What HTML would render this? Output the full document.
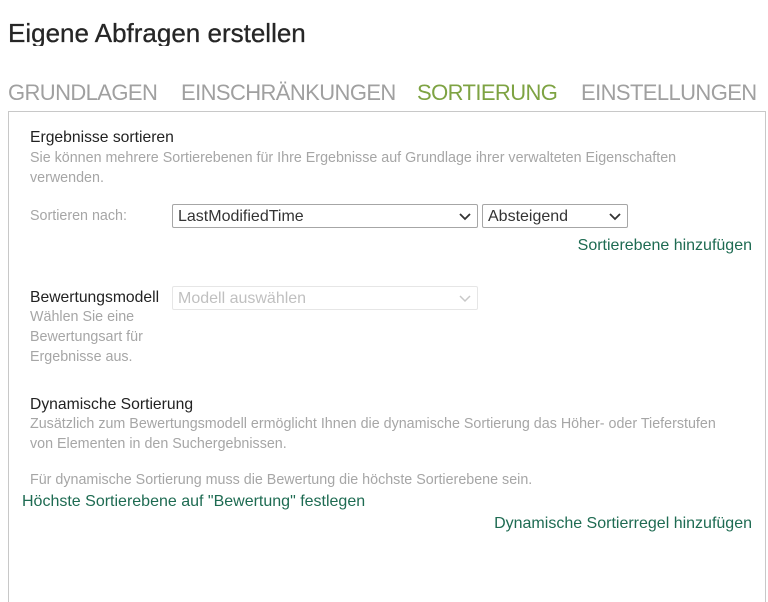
<!DOCTYPE html>
<html><head><meta charset="utf-8"><style>
html,body{margin:0;width:768px;height:602px;overflow:hidden}
body{background:#fff;font-family:"Liberation Sans",sans-serif;position:relative}
.a{position:absolute;white-space:nowrap}
.t{font-size:26px;color:#262626;top:18px;left:8px;height:28px;overflow:hidden;-webkit-text-stroke:0.3px #262626}
.tab{font-size:22px;top:80px;color:#a0a0a0;letter-spacing:-0.6px}
.box{position:absolute;left:8px;top:111px;width:756px;height:500px;border:1px solid #c8c8c8}
.h{font-size:15.7px;color:#222}
.g{font-size:14.3px;color:#a6a6a6;line-height:20px}
.l{font-size:16px;color:#1e6b52}
.sel{position:absolute;border:1px solid #a6a6a6;border-radius:2px;height:24px;box-sizing:border-box;font-size:16px;color:#333;padding:3px 5px}
.sel svg{position:absolute;right:6px;top:8px}
</style></head><body>
<div class="a t">Eigene Abfragen erstellen</div>
<div class="a tab" style="left:8px">GRUNDLAGEN</div>
<div class="a tab" style="left:181px">EINSCHRÄNKUNGEN</div>
<div class="a tab" style="left:417px;color:#7ea343">SORTIERUNG</div>
<div class="a tab" style="left:581px">EINSTELLUNGEN</div>
<div class="box"></div>
<div class="a h" style="left:30px;top:129px">Ergebnisse sortieren</div>
<div class="a g" style="left:30px;top:148px">Sie können mehrere Sortierebenen für Ihre Ergebnisse auf Grundlage ihrer verwalteten Eigenschaften<br>verwenden.</div>
<div class="a g" style="left:30px;top:206px">Sortieren nach:</div>
<div class="sel" style="left:172px;top:204px;width:306px">LastModifiedTime<svg width="12" height="8"><path d="M1 1l5 5 5-5" stroke="#333" stroke-width="1.8" fill="none"/></svg></div>
<div class="sel" style="left:482px;top:204px;width:146px">Absteigend<svg width="12" height="8"><path d="M1 1l5 5 5-5" stroke="#333" stroke-width="1.8" fill="none"/></svg></div>
<div class="a l" style="right:16px;top:237px">Sortierebene hinzufügen</div>
<div class="a h" style="left:30px;top:289px">Bewertungsmodell</div>
<div class="sel" style="left:172px;top:286px;width:306px;border-color:#e6e6e6;color:#c0c0c0">Modell auswählen<svg width="12" height="8"><path d="M1 1l5 5 5-5" stroke="#c8c8c8" stroke-width="1.5" fill="none"/></svg></div>
<div class="a g" style="left:30px;top:307px">Wählen Sie eine<br>Bewertungsart für<br>Ergebnisse aus.</div>
<div class="a h" style="left:30px;top:396px">Dynamische Sortierung</div>
<div class="a g" style="left:30px;top:414px">Zusätzlich zum Bewertungsmodell ermöglicht Ihnen die dynamische Sortierung das Höher- oder Tieferstufen<br>von Elementen in den Suchergebnissen.</div>
<div class="a g" style="left:30px;top:470px">Für dynamische Sortierung muss die Bewertung die höchste Sortierebene sein.</div>
<div class="a l" style="left:22px;top:493px">Höchste Sortierebene auf "Bewertung" festlegen</div>
<div class="a l" style="right:16px;top:515px">Dynamische Sortierregel hinzufügen</div>
</body></html>
